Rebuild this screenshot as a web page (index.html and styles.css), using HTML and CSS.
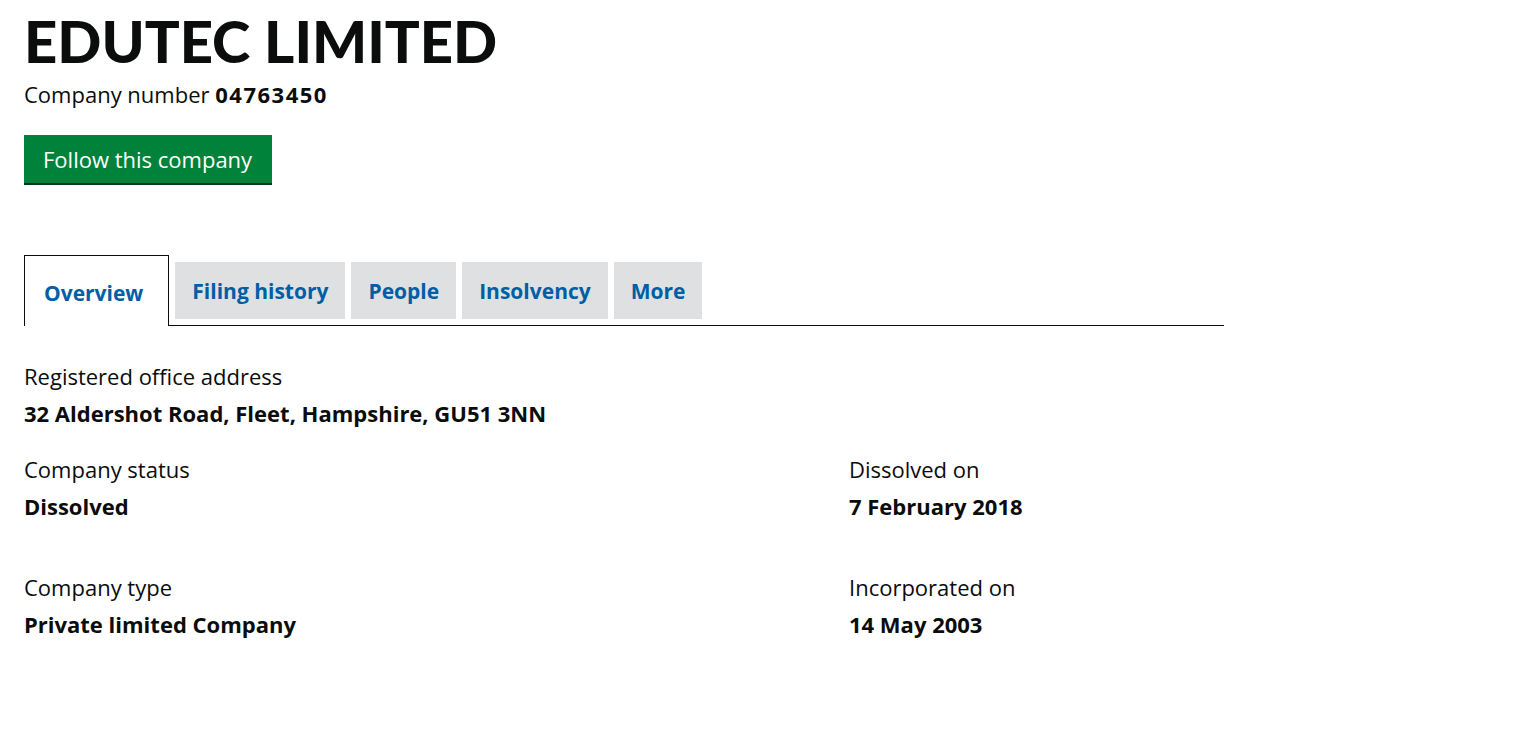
FILE: index.html
```html
<!DOCTYPE html>
<html lang="en">
<head>
<meta charset="utf-8">
<title>EDUTEC LIMITED</title>
<link rel="stylesheet" href="styles.css">
</head>
<body>
<main class="page">
  <h1 class="heading">EDUTEC LIMITED</h1>
  <p class="company-number">Company number <strong>04763450</strong></p>
  <a class="button" href="#">Follow this company</a>

  <nav class="tabs">
    <a class="tab active" href="#">Overview</a>
    <a class="tab" href="#">Filing history</a>
    <a class="tab" href="#">People</a>
    <a class="tab" href="#">Insolvency</a>
    <a class="tab" href="#">More</a>
  </nav>

  <section class="details">
    <dl class="item">
      <dt>Registered office address</dt>
      <dd>32 Aldershot Road, Fleet, Hampshire, GU51 3NN</dd>
    </dl>
    <div class="grid">
      <dl class="item">
        <dt>Company status</dt>
        <dd>Dissolved</dd>
      </dl>
      <dl class="item">
        <dt>Dissolved on</dt>
        <dd>7 February 2018</dd>
      </dl>
      <dl class="item">
        <dt>Company type</dt>
        <dd>Private limited Company</dd>
      </dl>
      <dl class="item">
        <dt>Incorporated on</dt>
        <dd>14 May 2003</dd>
      </dl>
    </div>
  </section>
</main>
</body>
</html>
```

FILE: styles.css
```css
* { box-sizing: border-box; }
html, body { margin: 0; padding: 0; background: #fff; }
body {
  font-family: "Open Sans", Lato, Arial, sans-serif;
  color: #0b0c0c;
}
.page {
  width: 1200px;
  margin-left: 24px;
  padding-top: 8px;
}
.heading {
  margin: 0;
  font-family: Lato, "Open Sans", sans-serif;
  font-size: 58px;
  line-height: 66px;
  font-weight: 900;
}
.company-number {
  margin: 6px 0 0;
  font-size: 22px;
  line-height: 28px;
}
.company-number strong {
  font-weight: 700;
  letter-spacing: 1.5px;
}
.button {
  display: inline-block;
  margin-top: 27px;
  background: #00823b;
  color: #fff;
  text-decoration: none;
  font-size: 22px;
  line-height: 24px;
  padding: 12px 20px 12px 19px;
  box-shadow: 0 2px 0 #003618;
}
.tabs {
  display: flex;
  align-items: flex-end;
  gap: 6px;
  margin-top: 72px;
  border-bottom: 1px solid #0b0c0c;
  height: 71px;
}
.tab {
  display: block;
  background: #dee0e2;
  color: #005ea5;
  font-weight: 700;
  font-size: 21px;
  line-height: 59px;
  height: 57px;
  padding: 0 17px;
  margin-bottom: 6px;
  text-decoration: none;
}
.tab.active {
  background: #fff;
  border: 1px solid #0b0c0c;
  border-bottom: 0;
  height: 71px;
  line-height: 74px;
  padding: 0 25px 0 19px;
  margin-bottom: -1px;
}
.details { margin-top: 36px; }
.item { margin: 0; }
.item dt {
  font-size: 22px;
  line-height: 28px;
}
.item dd {
  margin: 9px 0 0;
  font-size: 22px;
  line-height: 28px;
  font-weight: 700;
}
.grid {
  display: grid;
  grid-template-columns: 825px 1fr;
  row-gap: 53px;
  margin-top: 28px;
}
```
